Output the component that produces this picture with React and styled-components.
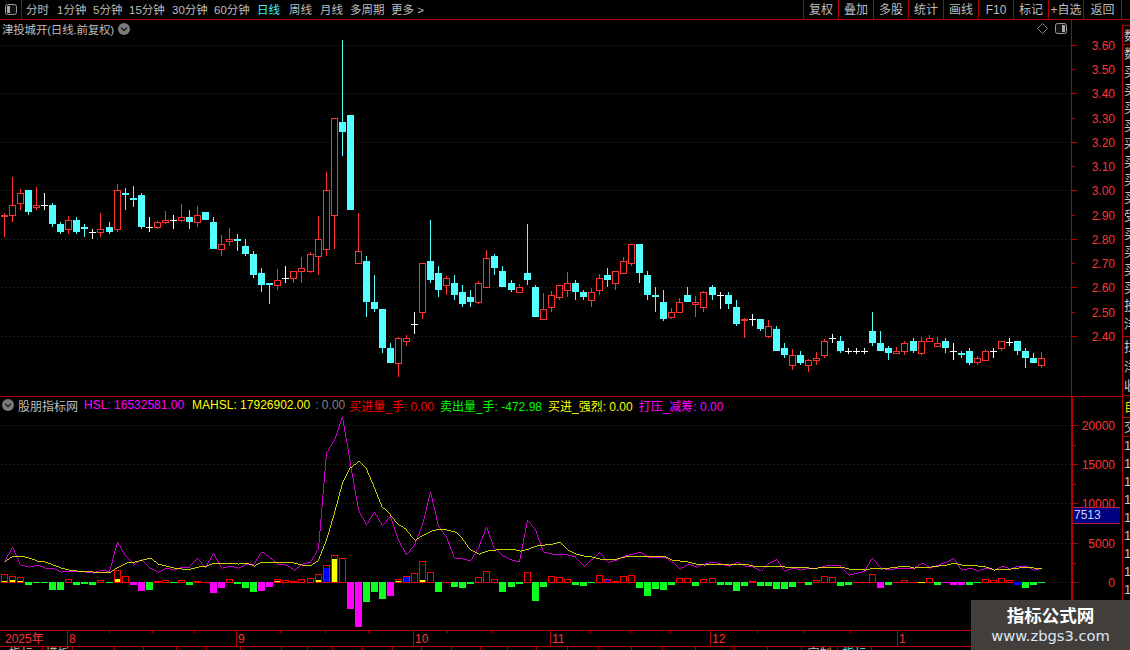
import React from "react";
import styled, { createGlobalStyle } from "styled-components";

const RED_LINE = "#b40000";
const TEXT = "#bdbdbd";
const FONT = `"Liberation Sans", "Noto Sans CJK SC", sans-serif`;

const GlobalStyle = createGlobalStyle`
  html, body {
    margin: 0;
    background: #000;
    overflow: hidden;
  }
`;

const Screen = styled.div`
  position: relative;
  width: 1130px;
  height: 650px;
  display: flex;
  flex-direction: column;
  overflow: hidden;
  background: #000;
  color: ${TEXT};
  font-family: ${FONT};
  font-size: 12px;
`;

const Toolbar = styled.div`
  display: flex;
  height: 20px;
  flex: none;
  box-sizing: border-box;
  border-bottom: 1px solid ${RED_LINE};
`;

const PanelToggle = styled.div`
  width: 22px;
  box-sizing: border-box;
  border-right: 1px solid ${RED_LINE};
  display: flex;
  align-items: center;
  justify-content: center;
  padding-bottom: 1px;
`;

const PeriodTabs = styled.div`
  display: flex;
  padding-left: 4px;
  font-size: 11.5px;
  line-height: 20px;
`;

const PeriodTab = styled.span`
  width: ${(p) => p.$w}px;
  flex: none;
  color: ${(p) => (p.$active ? "#3cf0ff" : TEXT)};
  white-space: nowrap;
`;

const ActionGroup = styled.div`
  display: flex;
  margin-left: auto;
  border-left: 1px solid ${RED_LINE};
  margin-right: 8px;
`;

const ActionButton = styled.div`
  width: ${(p) => p.$w || 35}px;
  box-sizing: border-box;
  border-right: 1px solid ${RED_LINE};
  text-align: center;
  line-height: 20px;
  white-space: nowrap;
`;

const Body = styled.div`
  display: flex;
  flex: 1;
  min-height: 0;
`;

const Charts = styled.div`
  width: 1122px;
  flex: none;
  display: flex;
  flex-direction: column;
`;

const PaneRow = styled.div`
  display: flex;
  height: ${(p) => p.$h}px;
  flex: none;
  box-sizing: border-box;
  border-top: ${(p) => (p.$ruled ? `1px solid ${RED_LINE}` : "none")};
`;

const Plot = styled.div`
  width: 1071px;
  flex: none;
  display: flex;
  flex-direction: column;
`;

const PaneHeader = styled.div`
  height: ${(p) => p.$h}px;
  flex: none;
  box-sizing: border-box;
  display: flex;
  align-items: center;
  gap: ${(p) => p.$gap || 0}px;
  padding: 0 4px 3px 2px;
  white-space: nowrap;
`;

const PaneTitle = styled.span`
  color: ${TEXT};
  margin-left: -2px;
`;

const PriceTitle = styled.span`
  color: ${TEXT};
  font-size: 11.5px;
  letter-spacing: -0.2px;
  margin-right: 4px;
`;

const HeaderTools = styled.div`
  display: flex;
  align-items: center;
  gap: 7px;
  margin-left: auto;
`;

const Reading = styled.span`
  color: ${(p) => p.$color};
  margin-right: ${(p) => p.$after || 0}px;
`;

const ChartSvg = styled.svg`
  display: block;
  flex: none;
`;

const AxisColumn = styled.div`
  position: relative;
  width: 51px;
  flex: none;
  box-sizing: border-box;
  border-left: ${(p) => p.$line || 1}px solid ${RED_LINE};
`;

const CursorValue = styled.div`
  position: absolute;
  left: 0;
  right: 2px;
  top: 110px;
  height: 17px;
  box-sizing: border-box;
  background: #000080;
  border-top: 1px solid #b02040;
  border-bottom: 1px solid #b02040;
  color: #c4d4ff;
  line-height: 15px;
  padding-left: 1px;
`;

const DateRow = styled.div`
  height: 17px;
  flex: none;
  box-sizing: border-box;
  border-top: 1px solid ${RED_LINE};
  border-bottom: 1px solid ${RED_LINE};
`;

const BottomTabs = styled.div`
  display: flex;
  height: 3px;
  flex: none;
  overflow: hidden;
`;

const BottomTab = styled.div`
  width: ${(p) => p.$w}px;
  flex: none;
  box-sizing: border-box;
  border-right: 1px solid ${RED_LINE};
  text-align: center;
  line-height: 14px;
  white-space: nowrap;
  overflow: hidden;
  color: ${(p) => p.$color || TEXT};
`;

const Sidebar = styled.div`
  width: 8px;
  flex: none;
  margin-top: 5px;
  box-sizing: border-box;
  border-left: 1px solid ${RED_LINE};
  display: flex;
  flex-direction: column;
  overflow: hidden;
`;

const SideCell = styled.div`
  height: ${(p) => p.$h}px;
  flex: none;
  box-sizing: border-box;
  border-top: ${(p) => (p.$top ? `1px solid ${RED_LINE}` : "none")};
  border-bottom: ${(p) => (p.$bottom ? `1px solid ${RED_LINE}` : "none")};
  padding-left: 1px;
  line-height: ${(p) => p.$h - 1}px;
  font-size: 13px;
  white-space: nowrap;
  color: ${(p) => p.$color || "#c8c8c8"};
`;

const Watermark = styled.div`
  position: absolute;
  right: 0;
  bottom: 0;
  width: 159px;
  height: 50px;
  background: #423e3c;
  display: flex;
  flex-direction: column;
  align-items: center;
`;

const WatermarkName = styled.div`
  color: #fff;
  font: bold 17.5px/22px "Noto Sans CJK SC", sans-serif;
  margin-top: 4px;
`;

const WatermarkUrl = styled.div`
  color: #dce8f4;
  font: 14.7px/20px "DejaVu Sans", sans-serif;
`;

/* [kind, bodyTop, bodyBottom, high, low] in page pixels */
const CANDLES = [
  ["r",215,217,213,237],["r",205,216,177,222],["r",193,204,189,210],["c",190,212,190,215],["r",205,208,187,210],
  ["w",205,205,193,210],["c",205,224,203,227],["c",224,232,222,234],["r",220,230,216,234],["c",220,232,217,234],
  ["c",227,229,224,237],["w",232,232,229,239],["r",229,233,213,237],["c",227,232,222,234],["r",190,230,184,232],
  ["c",193,195,188,210],["c",198,200,186,207],["c",195,227,193,229],["w",227,227,217,232],["r",222,228,221,229],
  ["r",220,223,211,224],["w",220,220,215,229],["r",217,221,204,222],["c",217,222,210,229],["r",215,223,206,227],
  ["c",212,220,212,220],["c",222,249,217,249],["r",244,250,235,256],["r",239,242,228,246],["c",239,241,234,251],
  ["c",246,254,239,256],["c",254,275,251,278],["c",273,285,268,292],["c",283,285,283,304],["r",280,286,269,290],
  ["w",278,278,266,283],["r",271,279,271,283],["r",268,272,257,283],["r",254,272,252,273],["r",239,257,216,275],
  ["r",190,250,172,256],["r",118,216,118,249],["c",122,132,40,156],["c",115,210,115,210],["r",251,264,213,264],
  ["c",261,302,256,317],["c",302,309,275,312],["c",309,348,309,353],["c",348,363,343,363],["r",338,364,337,377],
  ["r",338,342,335,346],["w",324,324,312,334],["r",263,313,263,319],["c",261,280,220,283],["c",273,290,266,297],
  ["r",278,286,276,295],["c",283,295,275,300],["c",292,304,285,307],["c",297,302,290,307],["r",283,303,281,304],
  ["r",258,288,250,288],["c",256,268,254,275],["c",271,287,266,287],["c",283,290,280,292],["r",287,293,284,293],
  ["c",273,280,224,285],["c",287,317,285,317],["r",309,320,293,320],["r",295,308,291,312],["r",285,298,285,300],
  ["r",283,291,272,297],["c",283,292,280,300],["c",292,297,290,300],["r",292,301,288,307],["r",278,291,274,295],
  ["c",275,280,268,287],["r",271,284,271,290],["r",261,274,257,274],["r",244,264,244,266],["c",244,273,244,283],
  ["c",275,295,271,300],["c",295,297,287,312],["c",302,319,290,321],["r",312,318,308,319],["r",302,313,298,313],
  ["c",295,302,287,302],["r",302,305,296,317],["r",292,308,291,312],["c",287,295,285,300],["w",295,295,292,309],
  ["c",295,304,292,309],["c",307,324,300,326],["r",319,321,318,338],["w",319,319,314,326],["c",319,329,319,331],
  ["r",326,337,320,338],["c",329,351,326,351],["c",348,355,343,358],["r",355,366,349,370],["c",355,363,351,365],
  ["r",360,366,359,372],["r",358,361,352,365],["r",341,356,339,358],["w",338,338,334,343],["c",341,351,336,353],
  ["w",351,351,348,354],["w",351,351,348,354],["w",351,351,348,354],["c",331,343,312,346],["c",343,351,331,351],
  ["c",348,353,346,360],["r",351,354,347,354],["r",343,352,341,355],["c",341,351,338,353],["r",341,354,337,355],
  ["r",338,342,335,342],["r",343,347,337,347],["c",341,348,338,353],["w",351,351,343,360],["c",353,355,351,358],
  ["c",351,363,348,365],["r",358,363,356,365],["r",351,361,349,361],["w",351,351,348,358],["r",341,349,341,351],
  ["w",342,342,338,346],["c",341,351,341,355],["c",351,358,348,368],["c",358,363,353,363],["r",358,366,352,368],
];

const MAGENTA = [
  562,547,565,567,565,568,568,572,571,571,572,573,570,572,542,556,564,559,568,572,
  568,570,567,567,558,568,553,568,566,568,564,565,552,558,564,565,570,564,562,549,
  453,440,417,464,510,525,512,526,516,540,555,545,525,492,526,537,558,559,561,548,
  527,549,556,560,562,520,530,552,554,554,555,557,566,559,552,562,560,556,554,552,
  557,557,557,562,569,564,567,564,562,564,566,562,566,567,571,563,559,571,568,570,
  568,568,566,565,566,575,573,571,558,568,570,568,568,568,563,568,565,562,558,570,
  568,571,568,570,566,569,566,566,570,568,
];

const YELLOW = [
  561,556,556,558,561,562,565,568,570,571,571,572,572,572,567,563,562,560,558,564,
  566,568,569,569,567,566,563,563,563,564,563,566,562,562,562,562,563,565,565,560,
  540,513,483,467,461,469,488,508,515,525,530,540,535,531,529,530,532,539,550,554,
  551,550,549,549,551,549,546,545,544,542,550,554,556,557,559,559,559,557,556,556,
  556,556,556,560,561,562,564,565,564,564,565,564,564,566,566,566,566,567,567,567,
  568,568,567,567,567,569,569,570,568,569,568,567,566,568,567,567,566,565,563,565,
  565,566,567,570,569,569,568,567,568,569,
];

/* positive: red box above zero, "g"/"m"/"b": bars below zero.
   [kind, height, fill colour key, fill height] */
const BARS = [
  ["r",8,"y",2],["r",6,"y",3],["r",5,"y",2],["g",3],["g",1],["g",1],["g",8],["g",8],["r",3],["g",3],
  ["g",2],["g",3],["r",2],["g",1],["r",12,"y",4],["r",6],["m",3],["m",9],["g",8],["r",1],
  ["r",2],["g",1],["r",2],["g",3],["r",1,"y",1],["r",0],["m",11],["m",6],["r",3],["g",2],
  ["g",6],["g",10],["m",9],["m",5],["r",3,"y",2],["r",2],["r",1],["r",3],["r",4],["r",8,"y",3],
  ["r",17,"by",15],["r",27,"y",24],["r",24],["m",27],["m",45],["g",20],["g",10],["g",17],["m",14],["r",3,"y",2],
  ["r",6,"b",6],["r",9],["r",21,"y",3],["r",10],["g",10],["r",0],["g",5],["g",6],["g",2],["r",5],
  ["r",11],["r",3],["g",10],["g",5],["g",2],["r",10],["g",19],["g",5],["r",6],["r",5],
  ["r",3],["g",3],["g",4],["g",1],["r",7],["r",3,"b",3],["r",1],["r",6],["r",7],["g",6],
  ["g",14],["g",7],["g",8],["g",3],["r",4],["r",4],["g",4],["r",3],["r",4],["g",3],
  ["g",3],["g",9],["g",4],["r",1],["g",4],["g",4],["g",7],["g",7],["g",5],["r",0],
  ["g",3],["r",2],["r",6],["r",5],["g",4],["g",3],["r",0],["r",0],["r",8],["m",6],
  ["g",3],["r",0],["r",2],["r",0],["y",1],["r",4],["g",3],["m",1],["m",3],["m",3],
  ["g",3],["g",1],["r",3],["r",2],["r",4],["r",2],["b",3],["g",6],["g",3],["g",1],
];

const BAR_COLORS = { g: "#0cff1e", m: "#ff00ff", b: "#0000ff", y: "#ffff00" };
const BASE_Y = 582;

const PRICE_GRID = [45, 93, 142, 190, 239, 287, 336];
const PRICE_LABELS = ["3.60","3.50","3.40","3.30","3.20","3.10","3.00","2.90","2.80","2.70","2.60","2.50","2.40"];
const PRICE_TICKS = [45, 69, 93, 118, 142, 166, 190, 215, 239, 263, 287, 312, 336];
const IND_GRID = [425, 464, 503, 543, 582];
const IND_LABELS = ["20000", "15000", "10000", "5000", "0"];
const IND_MINOR = [445, 484, 523, 563, 601, 621];

const PERIODS = [
  ["分时",31],["1分钟",36],["5分钟",36],["15分钟",43],["30分钟",42],["60分钟",43],
  ["日线",32],["周线",31],["月线",30],["多周期",41],["更多 >",36],
];
const ACTIONS = ["复权","叠加","多股","统计","画线","F10","标记","+自选","返回"];
const MONTHS = [[67,"8"],[236,"9"],[413,"10"],[550,"11"],[710,"12"],[897,"1"]];
const DATE_TICKS = [109,152,194,280,325,368,447,492,590,630,670,757,803,850];
const TABS = [
  [43,"指标"],[30,"模板"],[42],[29],[33],[30],[34],[41],[26],[25],[30],[30],[29],[30],[29],[27],[29],[31],[31],[33],
  [31],[33],[39],[33],[34],[36,"定制"],[34,"指标","#54ffff"],
];
const UPPER_SIDE = "数买买买买采买买买受买买买买投洋".split("");

const candleX = (i) => Math.round(4 + 8.04 * i);

function Candle({ data, x }) {
  const [kind, top, bottom, high, low] = data;
  const color = kind === "r" ? "#ff3232" : kind === "c" ? "#54ffff" : "#ffffff";
  return (
    <g>
      <rect x={x} y={high} width="1" height={Math.max(low - high, 1)} fill={color} />
      {kind === "w" && <rect x={x - 3} y={top} width="7" height="1" fill={color} />}
      {kind === "c" && <rect x={x - 3} y={top} width="7" height={bottom - top} fill={color} />}
      {kind === "r" && (
        <rect x={x - 2.5} y={top + 0.5} width="6" height={bottom - top - 1} fill="#000" stroke={color} />
      )}
    </g>
  );
}

function Bar({ data, x }) {
  const [kind, h, fill, fillH] = data;
  if (kind === "r") {
    if (h === 0) return <rect x={x - 3} y={BASE_Y} width="8" height="1" fill="#ff0000" />;
    const y = BASE_Y + 1 - fillH;
    return (
      <g>
        {fill === "by" && <rect x={x - 3} y={y} width="7" height={fillH} fill={BAR_COLORS.y} />}
        {fill === "by" && <rect x={x - 2} y={y} width="5" height={fillH} fill={BAR_COLORS.b} />}
        {fill && fill !== "by" && <rect x={x - 3} y={y} width="7" height={fillH} fill={BAR_COLORS[fill]} />}
        <rect x={x - 2.5} y={BASE_Y - h + 0.5} width="6" height={h} fill="none" stroke="#ff0000" />
      </g>
    );
  }
  return <rect x={x - 3} y={BASE_Y} width="7" height={h} fill={BAR_COLORS[kind]} />;
}

function GridLines({ ys }) {
  return ys.map((y) => (
    <line key={y} x1="1" x2="1071" y1={y + 0.5} y2={y + 0.5} stroke="#9c0000" strokeDasharray="1 3" />
  ));
}

function Trace({ values, color }) {
  const points = values.map((y, i) => `${candleX(i) + 0.5},${y}`).join(" ");
  return <polyline points={points} fill="none" stroke={color} strokeWidth="0.8" />;
}

function PriceChart() {
  return (
    <ChartSvg width="1071" height="356" viewBox="0 40 1071 356" shapeRendering="crispEdges">
      <GridLines ys={PRICE_GRID} />
      {CANDLES.map((c, i) => (
        <Candle key={i} data={c} x={candleX(i)} />
      ))}
    </ChartSvg>
  );
}

function IndicatorChart() {
  return (
    <ChartSvg width="1071" height="214" viewBox="0 416 1071 214" shapeRendering="crispEdges">
      <GridLines ys={IND_GRID} />
      {BARS.map((b, i) => (
        <Bar key={i} data={b} x={candleX(i)} />
      ))}
      <Trace values={MAGENTA} color="#ff00ff" />
      <Trace values={YELLOW} color="#ffff00" />
    </ChartSvg>
  );
}

function PriceAxis() {
  return (
    <ChartSvg width="50" height="376" viewBox="1072 20 50 376">
      {PRICE_TICKS.map((y, i) => (
        <g key={y}>
          <rect x="1072" y={y} width={i % 2 ? 3 : 5} height="1" fill={RED_LINE} />
          <text x="1115" y={y + 5} textAnchor="end" fill="#ff3232" fontSize="12" fontFamily="Liberation Sans">
            {PRICE_LABELS[i]}
          </text>
        </g>
      ))}
    </ChartSvg>
  );
}

function IndicatorAxis() {
  return (
    <ChartSvg width="49" height="233" viewBox="1073 397 49 233">
      {IND_GRID.map((y, i) => (
        <g key={y}>
          <rect x="1073" y={y} width="5" height="1" fill={RED_LINE} />
          <text x="1115" y={y + 5} textAnchor="end" fill="#ff3232" fontSize="12" fontFamily="Liberation Sans">
            {IND_LABELS[i]}
          </text>
        </g>
      ))}
      {IND_MINOR.map((y) => (
        <rect key={y} x="1073" y={y} width="3" height="1" fill={RED_LINE} />
      ))}
    </ChartSvg>
  );
}

function DateAxis() {
  return (
    <ChartSvg width="1122" height="15" viewBox="0 631 1122 15">
      <text x="5" y="643" fill="#ff3232" fontSize="12" fontFamily="Liberation Sans, Noto Sans CJK SC">2025年</text>
      {MONTHS.map(([x, label]) => (
        <g key={x}>
          <rect x={x} y="631" width="1" height="15" fill={RED_LINE} />
          <text x={x + 2} y="643" fill="#ff3232" fontSize="12" fontFamily="Liberation Sans">{label}</text>
        </g>
      ))}
      {DATE_TICKS.map((x) => (
        <rect key={x} x={x} y="631" width="1" height="2" fill={RED_LINE} />
      ))}
      <rect x="1071" y="631" width="1" height="15" fill={RED_LINE} />
    </ChartSvg>
  );
}

function ChevronBadge() {
  return (
    <svg width="12" height="12" viewBox="0 0 12 12">
      <circle cx="6" cy="6" r="6" fill="#7a7a7a" />
      <path d="M3 4.8 6 7.6 9 4.8" fill="none" stroke="#1c1c1c" strokeWidth="1.4" />
    </svg>
  );
}

function PanelIcon({ flip }) {
  return (
    <svg width="12" height="11" viewBox="0 0 12 11">
      <rect x="0.5" y="0.5" width="11" height="10" rx="2" fill="#111" stroke="#9a9a9a" />
      <rect x={flip ? 2 : 7} y="2" width="3" height="7" fill="#a8a8a8" />
    </svg>
  );
}

function DiamondIcon() {
  return (
    <svg width="11" height="11" viewBox="0 0 11 11">
      <path d="M5.5.5 10.5 5.5 5.5 10.5.5 5.5Z" fill="none" stroke="#808080" />
    </svg>
  );
}

export default function App() {
  return (
    <Screen>
      <GlobalStyle />
      <Toolbar>
        <PanelToggle>
          <PanelIcon flip />
        </PanelToggle>
        <PeriodTabs>
          {PERIODS.map(([label, w]) => (
            <PeriodTab key={label} $w={w} $active={label === "日线"}>{label}</PeriodTab>
          ))}
        </PeriodTabs>
        <ActionGroup>
          {ACTIONS.map((a) => (
            <ActionButton key={a} $w={a === "返回" ? 38 : 35}>{a}</ActionButton>
          ))}
        </ActionGroup>
      </Toolbar>

      <Body>
        <Charts>
          <PaneRow $h={376}>
            <Plot>
              <PaneHeader $h={20}>
                <PriceTitle>津投城开(日线.前复权)</PriceTitle>
                <ChevronBadge />
                <HeaderTools>
                  <DiamondIcon />
                  <PanelIcon />
                </HeaderTools>
              </PaneHeader>
              <PriceChart />
            </Plot>
            <AxisColumn>
              <PriceAxis />
            </AxisColumn>
          </PaneRow>

          <PaneRow $h={234} $ruled>
            <Plot>
              <PaneHeader $h={19} $gap={6}>
                <ChevronBadge />
                <PaneTitle>股朋指标网</PaneTitle>
                <Reading $color="#ff00ff" $after={2}>HSL: 16532581.00</Reading>
                <Reading $color="#ffff00" $after={-1}>MAHSL: 17926902.00</Reading>
                <Reading $color="#808080" $after={-2}>: 0.00</Reading>
                <Reading $color="#ff0000">买进量_手: 0.00</Reading>
                <Reading $color="#00ff00">卖出量_手: -472.98</Reading>
                <Reading $color="#ffff00">买进_强烈: 0.00</Reading>
                <Reading $color="#ff00ff">打压_减筹: 0.00</Reading>
              </PaneHeader>
              <IndicatorChart />
            </Plot>
            <AxisColumn $line={2}>
              <IndicatorAxis />
              <CursorValue>7513</CursorValue>
            </AxisColumn>
          </PaneRow>

          <DateRow>
            <DateAxis />
          </DateRow>
          <BottomTabs>
            {TABS.map(([w, label, color], i) => (
              <BottomTab key={i} $w={w} $color={color}>{label}</BottomTab>
            ))}
          </BottomTabs>
        </Charts>

        <Sidebar>
          <SideCell $h={20} $top $bottom>数</SideCell>
          {UPPER_SIDE.map((c, i) => (
            <SideCell key={i} $h={18}>{c}</SideCell>
          ))}
          <SideCell $h={4} $bottom />
          <SideCell $h={20}>拉</SideCell>
          <SideCell $h={20}>洋</SideCell>
          <SideCell $h={19} $bottom>收</SideCell>
          <SideCell $h={22} $bottom $color="#e0e000">自</SideCell>
          <SideCell $h={19} $bottom>交</SideCell>
          {Array.from({ length: 10 }, (_, i) => (
            <SideCell key={i} $h={18}>1</SideCell>
          ))}
        </Sidebar>
      </Body>

      <Watermark>
        <WatermarkName>指标公式网</WatermarkName>
        <WatermarkUrl>www.zbgs3.com</WatermarkUrl>
      </Watermark>
    </Screen>
  );
}
